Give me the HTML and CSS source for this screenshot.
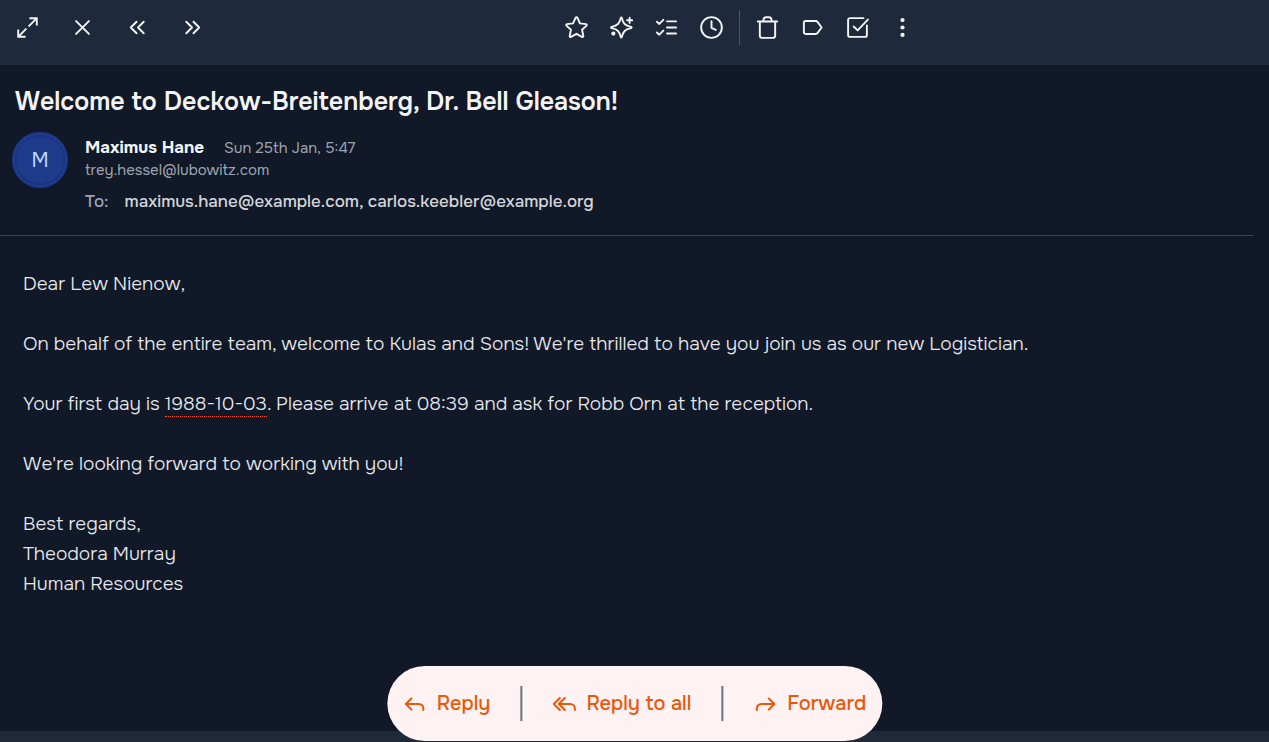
FILE: index.html
```html
<!DOCTYPE html>
<html lang="en">
<head>
<meta charset="utf-8">
<meta name="viewport" content="width=device-width, initial-scale=1">
<title>Welcome to Deckow-Breitenberg, Dr. Bell Gleason!</title>
<link rel="stylesheet" href="styles.css">
</head>
<body>
<header class="toolbar">
  <nav class="nav-tools" aria-label="Message navigation">
    <button class="tool" type="button" aria-label="Expand"><svg class="icon icon-square" viewBox="0 0 24 24"><path d="M13.200 10.800 21.200 2.800M14 2.300h7.700V10M10.800 13.200 2.800 21.200M2.300 14v7.700H10"/></svg></button>
    <button class="tool" type="button" aria-label="Close"><svg class="icon" viewBox="0 0 24 24"><path d="m5.300 5.300 13.400 13.400M18.700 5.300 5.300 18.700"/></svg></button>
    <button class="tool" type="button" aria-label="Previous"><svg class="icon" viewBox="0 0 24 24"><path d="m11 6-6 6 6 6M18.500 6l-6 6 6 6"/></svg></button>
    <button class="tool" type="button" aria-label="Next"><svg class="icon" viewBox="0 0 24 24"><path d="m5.500 6 6 6-6 6M13 6l6 6-6 6"/></svg></button>
  </nav>
  <div class="actions">
    <button class="action" type="button" aria-label="Star"><svg class="icon" viewBox="0 0 24 24"><path d="M11.100 1.800a1 1 0 0 1 1.800 0l2.700 5.900 6.400.8a.9.9 0 0 1 .5 1.500l-4.700 4.400 1.300 6.500a.9.9 0 0 1-1.400.9L12 18.600l-5.700 3.200a.9.9 0 0 1-1.400-.9l1.300-6.500L1.500 10a.9.9 0 0 1 .5-1.500l6.400-.8z"/></svg></button>
    <button class="action" type="button" aria-label="Assistant"><svg class="icon" viewBox="0 0 24 24"><path d="M11.200 2.200Q11.800.8 12.400 2.200C13.800 8 15.500 9.900 21.900 11.300q1.400.7 0 1.400C15.500 14.100 13.800 16 12.400 21.800q-.6 1.400-1.200 0C9.800 16 8.100 14.100 1.700 12.700Q.3 12 1.700 11.300C8.100 9.900 9.800 8 11.200 2.200ZM20.500 1.800v5.400M17.800 4.500h5.400"/><circle cx="3.500" cy="18.300" r="1.200"/></svg></button>
    <button class="action" type="button" aria-label="Checklist"><svg class="icon" viewBox="0 0 24 24"><path d="M12.500 5.600h9.500M12.500 12h9.500M12.500 18.300h9.500M2 6l2.500 2.300L8.700 4M2 17.200l2.500 2.300 4.200-4.300"/></svg></button>
    <button class="action" type="button" aria-label="Snooze"><svg class="icon" viewBox="0 0 24 24"><circle cx="12" cy="12" r="10.800"/><path d="M12 5.500v7l4.500 2"/></svg></button>
    <span class="tool-divider"></span>
    <button class="action" type="button" aria-label="Delete"><svg class="icon" viewBox="0 0 24 24"><path d="M1.900 5.800h20.200M4 5.800v14.500a2.500 2.500 0 0 0 2.500 2.500h11a2.500 2.500 0 0 0 2.500-2.500V5.800M7.800 5.500V4A2.800 2.800 0 0 1 10.600 1.300h2.800A2.800 2.800 0 0 1 16.200 4v1.500"/></svg></button>
    <button class="action" type="button" aria-label="Label"><svg class="icon" viewBox="0 0 24 24"><path d="M4.800 5.300h10.500a2.500 2.500 0 0 1 2.100 1.100L21.500 12l-4.100 5.600a2.500 2.500 0 0 1-2.100 1.100H4.800a1.800 1.800 0 0 1-1.800-1.800V7.100a1.800 1.800 0 0 1 1.800-1.800Z"/></svg></button>
    <button class="action" type="button" aria-label="Mark done"><svg class="icon" viewBox="0 0 24 24"><path d="M18.300 2.200H4.200a2 2 0 0 0-2 2v15.600a2 2 0 0 0 2 2h15.600a2 2 0 0 0 2-2v-10M8 11l4.200 4L22.800 3.700"/></svg></button>
    <button class="action" type="button" aria-label="More"><svg class="icon icon-dots" viewBox="0 0 24 24"><circle cx="12" cy="4.300" r="2.200"/><circle cx="12" cy="12" r="2.200"/><circle cx="12" cy="19.700" r="2.200"/></svg></button>
  </div>
</header>

<main class="mail">
  <div class="mail-header">
    <h1 class="subject">Welcome to Deckow-Breitenberg, Dr. Bell Gleason!</h1>
    <div class="sender">
      <div class="avatar">M</div>
      <div class="sender-info">
        <div class="sender-line"><span class="sender-name">Maximus Hane</span><time class="date">Sun 25th Jan, 5:47</time></div>
        <div class="sender-email">trey.hessel@lubowitz.com</div>
        <div class="recipients"><span class="to">To:</span><span>maximus.hane@example.com, carlos.keebler@example.org</span></div>
      </div>
    </div>
  </div>
  <article class="message">
    <p>Dear Lew Nienow,</p>
    <p>On behalf of the entire team, welcome to Kulas and Sons! We're thrilled to have you join us as our new Logistician.</p>
    <p>Your first day is <span class="detected-date">1988-10-03</span>. Please arrive at 08:39 and ask for Robb Orn at the reception.</p>
    <p>We're looking forward to working with you!</p>
    <p>Best regards,<br>Theodora Murray<br>Human Resources</p>
  </article>
</main>

<div class="reply-bar">
  <button class="reply" type="button"><svg class="reply-icon" viewBox="0 0 24 24"><path d="m8 6.500-5.500 5.500L8 17.500M3 12h12.500a4.500 4.500 0 0 1 4.500 4.500V18"/></svg>Reply</button>
  <span class="reply-divider"></span>
  <button class="reply" type="button"><svg class="reply-icon" viewBox="0 0 24 24"><path d="m7.500 6-6 6 6 6M12.500 6l-6 6 6 6M7 12h11a4.500 4.500 0 0 1 4.500 4.500V18"/></svg>Reply to all</button>
  <span class="reply-divider"></span>
  <button class="reply" type="button"><svg class="reply-icon" viewBox="0 0 24 24"><path d="m15.500 6.500 5.500 5.500-5.500 5.500M20.500 12H8a4.500 4.500 0 0 0-4.500 4.500V18"/></svg>Forward</button>
</div>
</body>
</html>
```

FILE: styles.css
```css
* { box-sizing: border-box; }

body {
  margin: 0;
  min-height: 100vh;
  display: flex;
  flex-direction: column;
  padding-bottom: 11px;
  background: #1f2937;
  color: #e5e7eb;
  font-family: Onest, Inter, "Liberation Sans", sans-serif;
}

button {
  border: 0;
  padding: 0;
  background: none;
  color: inherit;
  font: inherit;
  cursor: pointer;
}

.toolbar {
  display: flex;
  align-items: flex-start;
  padding: 5px 10px 15px 0;
  background: #1e293b;
  color: #f3f4f6;
}

.nav-tools { display: flex; }

.tool,
.action {
  display: grid;
  place-items: center;
  height: 45px;
}

.tool { width: 55px; }
.action { width: 45px; }

.icon {
  width: 23px;
  height: 23px;
  fill: none;
  stroke: currentColor;
  stroke-width: 2;
  stroke-linecap: round;
  stroke-linejoin: round;
}

.icon-square {
  stroke-linecap: butt;
  stroke-linejoin: miter;
}

.icon-dots {
  fill: currentColor;
  stroke: none;
}

.actions {
  flex: 1;
  display: flex;
  justify-content: center;
}

.tool-divider {
  width: 1px;
  height: 35px;
  margin: 5px;
  background: #4b5563;
}

.mail {
  flex: 1;
  background: #111827;
}

.mail-header {
  margin-right: 16px;
  padding: 21px 12px;
  border-bottom: 1px solid #374151;
}

.subject {
  margin: 0 0 14px 3px;
  color: #f3f4f6;
  font-size: 25px;
  line-height: 32px;
  font-weight: 600;
}

.sender {
  display: flex;
  gap: 17px;
}

.avatar {
  display: grid;
  place-items: center;
  width: 56px;
  height: 56px;
  border: 3px solid #1d3a8f;
  border-radius: 50%;
  background: #1e3a8a;
  box-shadow: inset 0 0 0 1px #1b3272;
  color: #bfdbfe;
  font-size: 20px;
}

.sender-line {
  display: flex;
  align-items: baseline;
  gap: 20px;
  padding-top: 4px;
  line-height: 24px;
}

.sender-name {
  color: #f3f4f6;
  font-size: 17px;
  font-weight: 700;
}

.date,
.sender-email {
  color: #9ca3af;
  font-size: 15px;
}

.sender-email { line-height: 20px; }

.recipients {
  display: flex;
  gap: 16px;
  margin-top: 10px;
  color: #d1d5db;
  font-size: 17px;
  line-height: 24px;
  font-weight: 500;
}

.to { color: #9ca3af; }

.message {
  padding: 33px 23px 96px;
  font-size: 19px;
  line-height: 30px;
  font-weight: 300;
}

.message p { margin: 0 0 30px; }

.detected-date { border-bottom: 1px dotted #f9532d; }

.reply-bar {
  position: fixed;
  left: 50%;
  bottom: 1px;
  transform: translateX(-50%);
  display: flex;
  align-items: center;
  height: 75px;
  padding: 0 16px;
  gap: 30px;
  border-radius: 38px;
  background: #fef2f2;
  color: #ea580c;
}

.reply {
  display: flex;
  align-items: center;
  gap: 10px;
  font-size: 20px;
  line-height: 30px;
  font-weight: 500;
  white-space: nowrap;
}

.reply-icon {
  width: 24px;
  height: 24px;
  fill: none;
  stroke: currentColor;
  stroke-width: 2;
  stroke-linecap: round;
  stroke-linejoin: round;
}

.reply-divider {
  width: 2px;
  height: 35px;
  background: #6b7280;
}
```
